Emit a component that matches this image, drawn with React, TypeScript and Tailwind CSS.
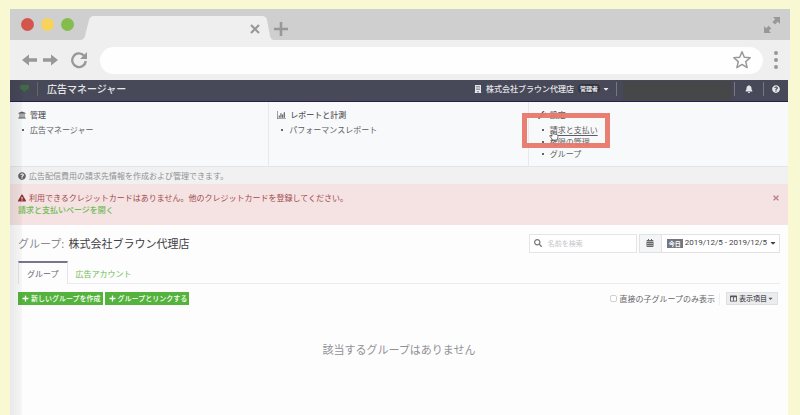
import React, { useState } from 'react';
import {
  FaBell,
  FaBuilding,
  FaCalendarAlt,
  FaCaretDown,
  FaColumns,
  FaExclamationTriangle,
  FaPlus,
  FaQuestionCircle,
  FaSearch,
  FaTimes,
  FaUniversity,
  FaWrench,
} from 'react-icons/fa';
import clsx from 'clsx';

const tabs = ['グループ', '広告アカウント'];

function ChartIcon() {
  return (
    <svg viewBox="0 0 16 14" className="h-2 w-[9px]" fill="currentColor" aria-hidden="true">
      <path d="M0 0h1v13h15v1H0zM3 8h2v4H3zM6 4h2v8H6zM9 6h2v6H9zM12 2h2v10h-2z" />
    </svg>
  );
}

function BrowserTabs() {
  return (
    <div className="flex h-[31px] items-center bg-[#cfcfcf] pl-[11px] pr-[9px] text-[#989898]">
      <div className="flex gap-[7px]">
        <span className="size-[13px] rounded-full bg-[#d5554d]" />
        <span className="size-[13px] rounded-full bg-[#f7d35c]" />
        <span className="size-[13px] rounded-full bg-[#84bd4b]" />
      </div>
      <div className="relative ml-1.5 flex h-full w-[194px] items-center justify-end pr-3.5 pt-2">
        <svg viewBox="0 0 194 24" className="absolute bottom-0 left-0 h-6 w-full" aria-hidden="true">
          <path d="M0 24Q4 24 5 20L9 4Q10 0 14 0H182Q186 0 187 4L190 20Q191 24 194 24Z" fill="#efefef" />
        </svg>
        <button className="relative" aria-label="タブを閉じる">
          <svg viewBox="0 0 10 10" className="size-2.5" stroke="currentColor" strokeWidth="2.2" aria-hidden="true">
            <path d="M1 1L9 9M9 1L1 9" />
          </svg>
        </button>
      </div>
      <button className="mt-2" aria-label="新しいタブ">
        <svg viewBox="0 0 14 14" className="size-3.5" stroke="currentColor" strokeWidth="2.6" aria-hidden="true">
          <path d="M7 0V14M0 7H14" />
        </svg>
      </button>
      <button className="ml-auto" aria-label="全画面表示">
        <svg viewBox="0 0 18 18" className="size-[18px]" fill="currentColor" aria-hidden="true">
          <path d="M10 1H17V8L14.8 5.8L12 8.6L9.4 6L12.2 3.2ZM8 17H1V10L3.2 12.2L5.6 9.8L8.2 12.4L5.8 14.8Z" />
        </svg>
      </button>
    </div>
  );
}

function AddressBar() {
  return (
    <div className="flex h-10 items-center bg-[#efefef] pl-3 pr-3 text-[#989898]">
      <button aria-label="戻る">
        <svg viewBox="0 0 15 12" className="h-3 w-[15px]" fill="currentColor" aria-hidden="true">
          <path d="M0 6L7 0.5V4.2H15V7.8H7V11.5Z" />
        </svg>
      </button>
      <button className="ml-1.5" aria-label="進む">
        <svg viewBox="0 0 15 12" className="h-3 w-[15px]" fill="currentColor" aria-hidden="true">
          <path d="M15 6L8 0.5V4.2H0V7.8H8V11.5Z" />
        </svg>
      </button>
      <button className="ml-3" aria-label="再読み込み">
        <svg viewBox="0 0 18 18" className="size-[18px]" fill="none" stroke="currentColor" aria-hidden="true">
          <path d="M14 4.6A6.8 6.8 0 1 0 15.8 10" strokeWidth="2.3" />
          <path d="M17 1V8H10Z" fill="currentColor" stroke="none" />
        </svg>
      </button>
      <div className="ml-3 flex h-[27px] flex-1 items-center rounded-full bg-[#fefefe] pl-4 pr-[11px]">
        <input type="text" aria-label="アドレス" className="min-w-0 flex-1 bg-transparent text-xs outline-none" />
        <button aria-label="ブックマーク">
          <svg viewBox="0 0 20 20" className="size-5" fill="none" stroke="currentColor" strokeWidth="1.5" strokeLinejoin="round" aria-hidden="true">
            <path d="M10 1.8L12.3 7.2L18.2 7.7L13.7 11.6L15.1 17.6L10 14.4L4.9 17.6L6.3 11.6L1.8 7.7L7.7 7.2Z" />
          </svg>
        </button>
      </div>
      <button className="ml-[11px] flex flex-col gap-[3px]" aria-label="メニュー">
        <span className="size-1 rounded-full bg-current" />
        <span className="size-1 rounded-full bg-current" />
        <span className="size-1 rounded-full bg-current" />
      </button>
    </div>
  );
}

function NavBar() {
  return (
    <header className="flex h-[22px] items-center border-b border-[#25214a] bg-[#474858] pb-1 text-[#e6e6ea]">
      <svg viewBox="0 0 9 7" className="ml-2.5 h-[7px] w-[9px]" fill="#3f6b45" aria-hidden="true">
        <path d="M0 0H9V4L6.5 5L4.5 7L2.5 5L0 4Z" />
      </svg>
      <span className="ml-2 h-3.5 w-px bg-[#65656f]" />
      <a href="#" className="ml-[9px] text-[10px] font-medium leading-4">
        広告マネージャー
      </a>
      <button className="ml-auto flex items-center text-[8px] font-medium leading-3">
        <FaBuilding className="mr-1" />
        株式会社ブラウン代理店
        <span className="ml-1 rounded-full bg-[#33343f] px-0.5 text-[6px] font-bold leading-[9px]">管理者</span>
        <FaCaretDown className="ml-0.5" />
      </button>
      <span className="ml-1.5 h-3.5 w-px bg-[#777783]" />
      <span className="ml-1.5 mt-1 h-[19px] w-[109px] bg-[#464749]" />
      <span className="ml-0.5 h-3.5 w-px bg-[#777783]" />
      <button className="ml-2.5" aria-label="お知らせ">
        <FaBell className="size-2" />
      </button>
      <span className="ml-2.5 h-3.5 w-px bg-[#777783]" />
      <button className="ml-2 mr-2" aria-label="ヘルプ">
        <FaQuestionCircle className="size-2" />
      </button>
    </header>
  );
}

interface MenuColumnProps {
  icon: React.ReactNode;
  title: string;
  items: string[];
  className?: string;
  children?: React.ReactNode;
}

function MenuColumn({ icon, title, items, className, children }: MenuColumnProps) {
  return (
    <section className={clsx('relative h-16 flex-1 pt-[7px] text-[8px] leading-3 text-[#5c5c60]', className)}>
      <h2 className="mb-[3px] flex items-center gap-1 font-medium">
        {icon}
        {title}
      </h2>
      <ul className="pl-1">
        {items.map((item) => (
          <li key={item} className="flex items-center gap-1.5">
            <span className="size-0.5 rounded-full bg-[#333]" />
            <a href="#" className={item === '請求と支払い' ? 'underline underline-offset-2' : undefined}>
              {item}
            </a>
          </li>
        ))}
      </ul>
      {children}
    </section>
  );
}

export default function App() {
  const [active, setActive] = useState(tabs[0]);
  const [directOnly, setDirectOnly] = useState(false);

  return (
    <div className="flex min-h-screen flex-col bg-[#f8f8d2] px-2.5 pt-[9px] font-['Noto_Sans_CJK_JP',sans-serif]">
      <BrowserTabs />
      <AddressBar />

      <div className="relative mr-0.5 flex flex-1 flex-col bg-[#fdfdfd]">
        <div className="pointer-events-none absolute inset-y-0 left-0 z-10 w-3 bg-gradient-to-r from-black/8 to-black/3" />
        <NavBar />

        <nav className="flex border-b border-[#e4e5e8] bg-[#f8f9fb]">
          <MenuColumn
            className="border-r border-[#e8e9ec] pl-2"
            icon={<FaUniversity className="size-2" />}
            title="管理"
            items={['広告マネージャー']}
          />
          <MenuColumn
            className="border-r border-[#e8e9ec] pl-2"
            icon={<ChartIcon />}
            title="レポートと計測"
            items={['パフォーマンスレポート']}
          />
          <MenuColumn
            className="pl-[9px]"
            icon={<FaWrench className="size-2" />}
            title="設定"
            items={['請求と支払い', '権限の管理', 'グループ']}
          >
            <div className="absolute -left-[7px] top-[11px] h-[35px] w-[88px] border-[5px] border-[#e8786a]/95" />
            <svg viewBox="0 0 10 11" className="absolute left-5 top-[28px] h-[11px] w-2.5" fill="#fff" stroke="#55555a" strokeWidth="0.8" aria-hidden="true">
              <path d="M3 1Q4 0.3 4.4 1.4V4L8 4.6Q9.2 5 9 6.5L8.2 10H3.8L1 6.4Q0.8 5.4 2 5.6L3 6.4Z" />
            </svg>
          </MenuColumn>
        </nav>

        <p className="flex h-[17px] items-center gap-[3px] bg-[#f1f1f1] pl-2 text-[8px] text-[#909093]">
          <FaQuestionCircle className="text-[#66666a]" />
          広告配信費用の請求先情報を作成および管理できます。
        </p>

        <div className="flex items-start justify-between bg-[#f5e2e3] pb-[9px] pl-2 pr-2 pt-2 text-[8px] leading-3 text-[#a04a4c]">
          <div>
            <p className="flex items-center gap-[3px]">
              <FaExclamationTriangle className="text-[#8b3437]" />
              利用できるクレジットカードはありません。他のクレジットカードを登録してください。
            </p>
            <a href="#" className="block font-medium text-[#6cbc50]">
              請求と支払いページを開く
            </a>
          </div>
          <button className="mt-0.5 text-[#bb8589]" aria-label="閉じる">
            <FaTimes className="size-2" />
          </button>
        </div>

        <main className="flex flex-1 flex-col px-2 pt-2">
          <div className="flex items-center">
            <h1 className="flex gap-1 text-[11px] leading-5 text-[#3f3f44]">
              <span className="text-[#8b8b8f]">グループ:</span>
              <span>株式会社ブラウン代理店</span>
            </h1>
            <label className="ml-auto flex h-[19px] w-[108px] items-center border border-[#e5e5e7] bg-white px-1 text-[7px]">
              <FaSearch className="size-2 shrink-0 text-[#77777b]" />
              <input
                type="text"
                aria-label="名前を検索"
                placeholder="名前を検索"
                className="ml-1.5 min-w-0 flex-1 outline-none placeholder:text-[#c5c5c9]"
              />
            </label>
            <button className="ml-0.5 flex h-[19px] items-center border border-[#e2e2e5] bg-white text-[#444448]">
              <span className="flex h-full w-[22px] items-center justify-center border-r border-[#e2e2e5] bg-[#f4f5f7]">
                <FaCalendarAlt className="size-2 text-[#66666a]" />
              </span>
              <span className="ml-[5px] bg-[#747682] px-0.5 text-[6px] font-bold leading-[9px] text-white">今日</span>
              <span className="ml-0.5 font-[Roboto,sans-serif] text-[8px]">2019/12/5 - 2019/12/5</span>
              <FaCaretDown className="ml-0.5 mr-0.5 size-2" />
            </button>
          </div>

          <div role="tablist" className="mt-2 flex h-[23px] border-b border-[#ececee] text-[8px]">
            {tabs.map((tab) => (
              <button
                key={tab}
                role="tab"
                aria-selected={tab === active}
                onClick={() => setActive(tab)}
                className={clsx(
                  '-mb-px border-t-2 px-2',
                  tab === active
                    ? 'border-x border-x-[#e6e6e8] border-t-[#77778c] bg-[#fdfdfd] text-[#66666a]'
                    : 'border-t-transparent text-[#6cbc50]',
                )}
              >
                {tab}
              </button>
            ))}
          </div>

          <div className="mt-2 flex items-center gap-0.5 text-[7px]">
            <button className="flex h-[13px] items-center gap-0.5 bg-[#54b33c] pl-1 pr-0.5 font-medium text-white">
              <FaPlus />
              新しいグループを作成
            </button>
            <button className="flex h-[13px] items-center gap-0.5 bg-[#54b33c] pl-1 pr-0.5 font-medium text-white">
              <FaPlus />
              グループとリンクする
            </button>
            <label className="ml-auto flex items-center gap-0.5 text-[8px] text-[#66666a]">
              <input
                type="checkbox"
                checked={directOnly}
                onChange={(e) => setDirectOnly(e.target.checked)}
                className="size-[7px] appearance-none rounded-[2px] border border-[#cfcfd2] bg-white checked:bg-[#54b33c]"
              />
              直接の子グループのみ表示
            </label>
            <span className="ml-0.5 h-3 w-px bg-[#eeeeef]" />
            <button className="ml-1 mr-0.5 flex h-[13px] items-center gap-0.5 border border-[#dfdfe2] bg-[#ebecee] px-[3px] font-medium text-[#55555a]">
              <FaColumns />
              <span className="flex items-center">
                表示項目
                <FaCaretDown />
              </span>
            </button>
          </div>

          <p className="mt-9 text-center text-[11px] leading-4 text-[#919195]">該当するグループはありません</p>
        </main>
      </div>
    </div>
  );
}
